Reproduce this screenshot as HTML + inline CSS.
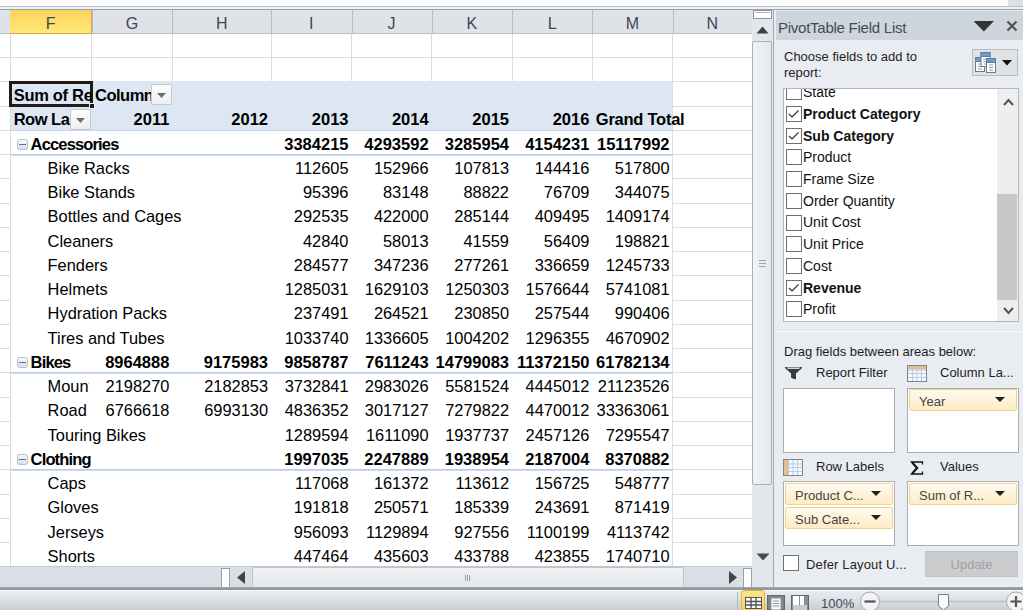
<!DOCTYPE html><html><head><meta charset="utf-8"><style>
*{box-sizing:border-box}
body{margin:0;width:1023px;height:610px;overflow:hidden;position:relative;background:#fff;font-family:"Liberation Sans",sans-serif;color:#000}
.a{position:absolute}
.t{position:absolute;white-space:nowrap;font-size:16px;line-height:20px}
.b{font-weight:bold}
.r{text-align:right}
</style></head><body>

<div class="a" style="left:0;top:0;width:1023px;height:6px;background:#fff"></div>
<div class="a" style="left:1008px;top:0;width:15px;height:6px;background:#dde1e6"></div>
<div class="a" style="left:0;top:6px;width:1023px;height:1px;background:#b9bec6"></div>
<div class="a" style="left:0;top:7px;width:1023px;height:2px;background:#eef1f8"></div>
<div class="a" style="left:0;top:9px;width:1023px;height:1px;background:#9ca1a8"></div>
<div class="a" style="left:0;top:10px;width:752px;height:23px;background:#dfe2e7"></div>
<div class="a" style="left:0;top:33px;width:752px;height:1px;background:#b9bdc4"></div>
<div class="a" style="left:10px;top:10px;width:82px;height:24px;background:linear-gradient(#fdd35c,#fee87a);border-right:1px solid #e0a244;border-bottom:1px solid #e0a244"></div>
<div class="t" style="left:10.0px;top:13.5px;width:81.5px;text-align:center;color:#3c4655;font-size:16px">F</div>
<div class="a" style="left:91.5px;top:10px;width:1px;height:23px;background:#b9bdc4"></div>
<div class="t" style="left:91.5px;top:13.5px;width:80.9px;text-align:center;color:#3c4655;font-size:16px">G</div>
<div class="a" style="left:172.4px;top:10px;width:1px;height:23px;background:#b9bdc4"></div>
<div class="t" style="left:172.4px;top:13.5px;width:98.6px;text-align:center;color:#3c4655;font-size:16px">H</div>
<div class="a" style="left:271.0px;top:10px;width:1px;height:23px;background:#b9bdc4"></div>
<div class="t" style="left:271.0px;top:13.5px;width:80.5px;text-align:center;color:#3c4655;font-size:16px">I</div>
<div class="a" style="left:351.5px;top:10px;width:1px;height:23px;background:#b9bdc4"></div>
<div class="t" style="left:351.5px;top:13.5px;width:80.1px;text-align:center;color:#3c4655;font-size:16px">J</div>
<div class="a" style="left:431.6px;top:10px;width:1px;height:23px;background:#b9bdc4"></div>
<div class="t" style="left:431.6px;top:13.5px;width:80.4px;text-align:center;color:#3c4655;font-size:16px">K</div>
<div class="a" style="left:512.0px;top:10px;width:1px;height:23px;background:#b9bdc4"></div>
<div class="t" style="left:512.0px;top:13.5px;width:80.4px;text-align:center;color:#3c4655;font-size:16px">L</div>
<div class="a" style="left:592.4px;top:10px;width:1px;height:23px;background:#b9bdc4"></div>
<div class="t" style="left:592.4px;top:13.5px;width:80.1px;text-align:center;color:#3c4655;font-size:16px">M</div>
<div class="a" style="left:672.5px;top:10px;width:1px;height:23px;background:#b9bdc4"></div>
<div class="t" style="left:672.5px;top:13.5px;width:79.5px;text-align:center;color:#3c4655;font-size:16px">N</div>
<div class="a" style="left:0;top:57.2px;width:752px;height:1px;background:#dadcdd"></div>
<div class="a" style="left:0;top:81.4px;width:752px;height:1px;background:#dadcdd"></div>
<div class="a" style="left:0;top:105.6px;width:752px;height:1px;background:#dadcdd"></div>
<div class="a" style="left:0;top:129.9px;width:752px;height:1px;background:#dadcdd"></div>
<div class="a" style="left:0;top:154.1px;width:752px;height:1px;background:#dadcdd"></div>
<div class="a" style="left:0;top:178.4px;width:752px;height:1px;background:#dadcdd"></div>
<div class="a" style="left:0;top:202.6px;width:752px;height:1px;background:#dadcdd"></div>
<div class="a" style="left:0;top:226.8px;width:752px;height:1px;background:#dadcdd"></div>
<div class="a" style="left:0;top:251.1px;width:752px;height:1px;background:#dadcdd"></div>
<div class="a" style="left:0;top:275.3px;width:752px;height:1px;background:#dadcdd"></div>
<div class="a" style="left:0;top:299.6px;width:752px;height:1px;background:#dadcdd"></div>
<div class="a" style="left:0;top:323.8px;width:752px;height:1px;background:#dadcdd"></div>
<div class="a" style="left:0;top:348.0px;width:752px;height:1px;background:#dadcdd"></div>
<div class="a" style="left:0;top:372.3px;width:752px;height:1px;background:#dadcdd"></div>
<div class="a" style="left:0;top:396.5px;width:752px;height:1px;background:#dadcdd"></div>
<div class="a" style="left:0;top:420.8px;width:752px;height:1px;background:#dadcdd"></div>
<div class="a" style="left:0;top:445.0px;width:752px;height:1px;background:#dadcdd"></div>
<div class="a" style="left:0;top:469.2px;width:752px;height:1px;background:#dadcdd"></div>
<div class="a" style="left:0;top:493.5px;width:752px;height:1px;background:#dadcdd"></div>
<div class="a" style="left:0;top:517.7px;width:752px;height:1px;background:#dadcdd"></div>
<div class="a" style="left:0;top:542.0px;width:752px;height:1px;background:#dadcdd"></div>
<div class="a" style="left:0;top:566.2px;width:752px;height:1px;background:#dadcdd"></div>
<div class="a" style="left:9.5px;top:34px;width:1px;height:532px;background:#dadcdd"></div>
<div class="a" style="left:91.0px;top:34px;width:1px;height:532px;background:#dadcdd"></div>
<div class="a" style="left:171.9px;top:34px;width:1px;height:532px;background:#dadcdd"></div>
<div class="a" style="left:270.5px;top:34px;width:1px;height:532px;background:#dadcdd"></div>
<div class="a" style="left:351.0px;top:34px;width:1px;height:532px;background:#dadcdd"></div>
<div class="a" style="left:431.1px;top:34px;width:1px;height:532px;background:#dadcdd"></div>
<div class="a" style="left:511.5px;top:34px;width:1px;height:532px;background:#dadcdd"></div>
<div class="a" style="left:591.9px;top:34px;width:1px;height:532px;background:#dadcdd"></div>
<div class="a" style="left:672.0px;top:34px;width:1px;height:532px;background:#dadcdd"></div>
<div class="a" style="left:10.5px;top:81.4px;width:661.5px;height:485.1px;background:#fff"></div>
<div class="a" style="left:10.5px;top:81.4px;width:661.5px;height:48.5px;background:#dce7f3"></div>
<div class="a" style="left:10.5px;top:129.9px;width:661.5px;height:1.6px;background:linear-gradient(#adc6e6,#d6e3f3)"></div>
<div class="a" style="left:10.5px;top:154.1px;width:661.5px;height:1.6px;background:linear-gradient(#adc6e6,#d6e3f3)"></div>
<div class="a" style="left:10.5px;top:372.3px;width:661.5px;height:1.6px;background:linear-gradient(#adc6e6,#d6e3f3)"></div>
<div class="a" style="left:10.5px;top:469.2px;width:661.5px;height:1.6px;background:linear-gradient(#adc6e6,#d6e3f3)"></div>
<div class="a" style="left:9px;top:81px;width:84px;height:26px;border:3px solid #221a16"></div>
<div class="a" style="left:89px;top:103px;width:6px;height:6px;background:#221a16;border:1px solid #e8eef6"></div>
<div class="t b" style="left:13.7px;top:85.2px;font-size:16.5px;color:#000;letter-spacing:-0.3px;width:78px;overflow:hidden">Sum of Re</div>
<div class="t b" style="left:95.0px;top:85.2px;font-size:16.5px;color:#000;letter-spacing:-0.5px;width:57px;overflow:hidden">Column Labels</div>
<div class="t b" style="left:13.7px;top:109.4px;font-size:16.5px;color:#000;letter-spacing:-0.5px;width:57px;overflow:hidden">Row Labels</div>
<div class="t b" style="left:-130.6px;width:300px;text-align:right;top:109.4px;font-size:16.5px;color:#000;">2011</div>
<div class="t b" style="left:-32.0px;width:300px;text-align:right;top:109.4px;font-size:16.5px;color:#000;">2012</div>
<div class="t b" style="left:48.5px;width:300px;text-align:right;top:109.4px;font-size:16.5px;color:#000;">2013</div>
<div class="t b" style="left:128.6px;width:300px;text-align:right;top:109.4px;font-size:16.5px;color:#000;">2014</div>
<div class="t b" style="left:209.0px;width:300px;text-align:right;top:109.4px;font-size:16.5px;color:#000;">2015</div>
<div class="t b" style="left:289.4px;width:300px;text-align:right;top:109.4px;font-size:16.5px;color:#000;">2016</div>
<div class="t b" style="left:595.8px;top:109.4px;font-size:16.5px;color:#000;letter-spacing:-0.25px">Grand Total</div>
<div class="a" style="left:151px;top:84px;width:21px;height:21px;background:linear-gradient(#fdfdfd,#eceef1);border:1px solid #c5c9cf;border-radius:1px"></div>
<svg class="a" style="left:157px;top:92.5px" width="9" height="5"><path d="M0 0H9L4.5 5Z" fill="#6d6f72"/></svg>
<div class="a" style="left:70px;top:109px;width:21px;height:21px;background:linear-gradient(#fdfdfd,#eceef1);border:1px solid #c5c9cf;border-radius:1px"></div>
<svg class="a" style="left:76px;top:117.5px" width="9" height="5"><path d="M0 0H9L4.5 5Z" fill="#6d6f72"/></svg>
<div class="a" style="left:17px;top:138.9px;width:11px;height:11px;border:1px solid #b3c0d0;border-radius:2.5px;background:linear-gradient(#f6f8fa,#d9dfe6)"></div>
<div class="a" style="left:19px;top:143.9px;width:7px;height:1px;background:#5a7490"></div>
<div class="t b" style="left:30.6px;top:133.7px;font-size:16.5px;color:#000;letter-spacing:-0.85px">Accessories</div>
<div class="t b" style="left:48.5px;width:300px;text-align:right;top:133.7px;font-size:16.5px;color:#000;">3384215</div>
<div class="t b" style="left:128.6px;width:300px;text-align:right;top:133.7px;font-size:16.5px;color:#000;">4293592</div>
<div class="t b" style="left:209.0px;width:300px;text-align:right;top:133.7px;font-size:16.5px;color:#000;">3285954</div>
<div class="t b" style="left:289.4px;width:300px;text-align:right;top:133.7px;font-size:16.5px;color:#000;">4154231</div>
<div class="t b" style="left:369.5px;width:300px;text-align:right;top:133.7px;font-size:16.5px;color:#000;">15117992</div>
<div class="t" style="left:47.6px;top:157.9px;font-size:16.4px;color:#000;">Bike Racks</div>
<div class="t" style="left:48.5px;width:300px;text-align:right;top:157.9px;font-size:16.4px;color:#000;">112605</div>
<div class="t" style="left:128.6px;width:300px;text-align:right;top:157.9px;font-size:16.4px;color:#000;">152966</div>
<div class="t" style="left:209.0px;width:300px;text-align:right;top:157.9px;font-size:16.4px;color:#000;">107813</div>
<div class="t" style="left:289.4px;width:300px;text-align:right;top:157.9px;font-size:16.4px;color:#000;">144416</div>
<div class="t" style="left:369.5px;width:300px;text-align:right;top:157.9px;font-size:16.4px;color:#000;">517800</div>
<div class="t" style="left:47.6px;top:182.2px;font-size:16.4px;color:#000;">Bike Stands</div>
<div class="t" style="left:48.5px;width:300px;text-align:right;top:182.2px;font-size:16.4px;color:#000;">95396</div>
<div class="t" style="left:128.6px;width:300px;text-align:right;top:182.2px;font-size:16.4px;color:#000;">83148</div>
<div class="t" style="left:209.0px;width:300px;text-align:right;top:182.2px;font-size:16.4px;color:#000;">88822</div>
<div class="t" style="left:289.4px;width:300px;text-align:right;top:182.2px;font-size:16.4px;color:#000;">76709</div>
<div class="t" style="left:369.5px;width:300px;text-align:right;top:182.2px;font-size:16.4px;color:#000;">344075</div>
<div class="t" style="left:47.6px;top:206.4px;font-size:16.4px;color:#000;">Bottles and Cages</div>
<div class="t" style="left:48.5px;width:300px;text-align:right;top:206.4px;font-size:16.4px;color:#000;">292535</div>
<div class="t" style="left:128.6px;width:300px;text-align:right;top:206.4px;font-size:16.4px;color:#000;">422000</div>
<div class="t" style="left:209.0px;width:300px;text-align:right;top:206.4px;font-size:16.4px;color:#000;">285144</div>
<div class="t" style="left:289.4px;width:300px;text-align:right;top:206.4px;font-size:16.4px;color:#000;">409495</div>
<div class="t" style="left:369.5px;width:300px;text-align:right;top:206.4px;font-size:16.4px;color:#000;">1409174</div>
<div class="t" style="left:47.6px;top:230.7px;font-size:16.4px;color:#000;">Cleaners</div>
<div class="t" style="left:48.5px;width:300px;text-align:right;top:230.7px;font-size:16.4px;color:#000;">42840</div>
<div class="t" style="left:128.6px;width:300px;text-align:right;top:230.7px;font-size:16.4px;color:#000;">58013</div>
<div class="t" style="left:209.0px;width:300px;text-align:right;top:230.7px;font-size:16.4px;color:#000;">41559</div>
<div class="t" style="left:289.4px;width:300px;text-align:right;top:230.7px;font-size:16.4px;color:#000;">56409</div>
<div class="t" style="left:369.5px;width:300px;text-align:right;top:230.7px;font-size:16.4px;color:#000;">198821</div>
<div class="t" style="left:47.6px;top:254.9px;font-size:16.4px;color:#000;">Fenders</div>
<div class="t" style="left:48.5px;width:300px;text-align:right;top:254.9px;font-size:16.4px;color:#000;">284577</div>
<div class="t" style="left:128.6px;width:300px;text-align:right;top:254.9px;font-size:16.4px;color:#000;">347236</div>
<div class="t" style="left:209.0px;width:300px;text-align:right;top:254.9px;font-size:16.4px;color:#000;">277261</div>
<div class="t" style="left:289.4px;width:300px;text-align:right;top:254.9px;font-size:16.4px;color:#000;">336659</div>
<div class="t" style="left:369.5px;width:300px;text-align:right;top:254.9px;font-size:16.4px;color:#000;">1245733</div>
<div class="t" style="left:47.6px;top:279.1px;font-size:16.4px;color:#000;">Helmets</div>
<div class="t" style="left:48.5px;width:300px;text-align:right;top:279.1px;font-size:16.4px;color:#000;">1285031</div>
<div class="t" style="left:128.6px;width:300px;text-align:right;top:279.1px;font-size:16.4px;color:#000;">1629103</div>
<div class="t" style="left:209.0px;width:300px;text-align:right;top:279.1px;font-size:16.4px;color:#000;">1250303</div>
<div class="t" style="left:289.4px;width:300px;text-align:right;top:279.1px;font-size:16.4px;color:#000;">1576644</div>
<div class="t" style="left:369.5px;width:300px;text-align:right;top:279.1px;font-size:16.4px;color:#000;">5741081</div>
<div class="t" style="left:47.6px;top:303.4px;font-size:16.4px;color:#000;">Hydration Packs</div>
<div class="t" style="left:48.5px;width:300px;text-align:right;top:303.4px;font-size:16.4px;color:#000;">237491</div>
<div class="t" style="left:128.6px;width:300px;text-align:right;top:303.4px;font-size:16.4px;color:#000;">264521</div>
<div class="t" style="left:209.0px;width:300px;text-align:right;top:303.4px;font-size:16.4px;color:#000;">230850</div>
<div class="t" style="left:289.4px;width:300px;text-align:right;top:303.4px;font-size:16.4px;color:#000;">257544</div>
<div class="t" style="left:369.5px;width:300px;text-align:right;top:303.4px;font-size:16.4px;color:#000;">990406</div>
<div class="t" style="left:47.6px;top:327.6px;font-size:16.4px;color:#000;">Tires and Tubes</div>
<div class="t" style="left:48.5px;width:300px;text-align:right;top:327.6px;font-size:16.4px;color:#000;">1033740</div>
<div class="t" style="left:128.6px;width:300px;text-align:right;top:327.6px;font-size:16.4px;color:#000;">1336605</div>
<div class="t" style="left:209.0px;width:300px;text-align:right;top:327.6px;font-size:16.4px;color:#000;">1004202</div>
<div class="t" style="left:289.4px;width:300px;text-align:right;top:327.6px;font-size:16.4px;color:#000;">1296355</div>
<div class="t" style="left:369.5px;width:300px;text-align:right;top:327.6px;font-size:16.4px;color:#000;">4670902</div>
<div class="a" style="left:17px;top:357.0px;width:11px;height:11px;border:1px solid #b3c0d0;border-radius:2.5px;background:linear-gradient(#f6f8fa,#d9dfe6)"></div>
<div class="a" style="left:19px;top:362.0px;width:7px;height:1px;background:#5a7490"></div>
<div class="t b" style="left:30.6px;top:351.8px;font-size:16.5px;color:#000;letter-spacing:-0.85px">Bikes</div>
<div class="t b" style="left:-130.6px;width:300px;text-align:right;top:351.8px;font-size:16.5px;color:#000;">8964888</div>
<div class="t b" style="left:-32.0px;width:300px;text-align:right;top:351.8px;font-size:16.5px;color:#000;">9175983</div>
<div class="t b" style="left:48.5px;width:300px;text-align:right;top:351.8px;font-size:16.5px;color:#000;">9858787</div>
<div class="t b" style="left:128.6px;width:300px;text-align:right;top:351.8px;font-size:16.5px;color:#000;">7611243</div>
<div class="t b" style="left:209.0px;width:300px;text-align:right;top:351.8px;font-size:16.5px;color:#000;">14799083</div>
<div class="t b" style="left:289.4px;width:300px;text-align:right;top:351.8px;font-size:16.5px;color:#000;">11372150</div>
<div class="t b" style="left:369.5px;width:300px;text-align:right;top:351.8px;font-size:16.5px;color:#000;">61782134</div>
<div class="t" style="left:47.6px;top:376.1px;font-size:16.4px;color:#000;width:41px;overflow:hidden">Mountain Bikes</div>
<div class="t" style="left:-130.6px;width:300px;text-align:right;top:376.1px;font-size:16.4px;color:#000;">2198270</div>
<div class="t" style="left:-32.0px;width:300px;text-align:right;top:376.1px;font-size:16.4px;color:#000;">2182853</div>
<div class="t" style="left:48.5px;width:300px;text-align:right;top:376.1px;font-size:16.4px;color:#000;">3732841</div>
<div class="t" style="left:128.6px;width:300px;text-align:right;top:376.1px;font-size:16.4px;color:#000;">2983026</div>
<div class="t" style="left:209.0px;width:300px;text-align:right;top:376.1px;font-size:16.4px;color:#000;">5581524</div>
<div class="t" style="left:289.4px;width:300px;text-align:right;top:376.1px;font-size:16.4px;color:#000;">4445012</div>
<div class="t" style="left:369.5px;width:300px;text-align:right;top:376.1px;font-size:16.4px;color:#000;">21123526</div>
<div class="t" style="left:47.6px;top:400.3px;font-size:16.4px;color:#000;">Road</div>
<div class="t" style="left:-130.6px;width:300px;text-align:right;top:400.3px;font-size:16.4px;color:#000;">6766618</div>
<div class="t" style="left:-32.0px;width:300px;text-align:right;top:400.3px;font-size:16.4px;color:#000;">6993130</div>
<div class="t" style="left:48.5px;width:300px;text-align:right;top:400.3px;font-size:16.4px;color:#000;">4836352</div>
<div class="t" style="left:128.6px;width:300px;text-align:right;top:400.3px;font-size:16.4px;color:#000;">3017127</div>
<div class="t" style="left:209.0px;width:300px;text-align:right;top:400.3px;font-size:16.4px;color:#000;">7279822</div>
<div class="t" style="left:289.4px;width:300px;text-align:right;top:400.3px;font-size:16.4px;color:#000;">4470012</div>
<div class="t" style="left:369.5px;width:300px;text-align:right;top:400.3px;font-size:16.4px;color:#000;">33363061</div>
<div class="t" style="left:47.6px;top:424.6px;font-size:16.4px;color:#000;">Touring Bikes</div>
<div class="t" style="left:48.5px;width:300px;text-align:right;top:424.6px;font-size:16.4px;color:#000;">1289594</div>
<div class="t" style="left:128.6px;width:300px;text-align:right;top:424.6px;font-size:16.4px;color:#000;">1611090</div>
<div class="t" style="left:209.0px;width:300px;text-align:right;top:424.6px;font-size:16.4px;color:#000;">1937737</div>
<div class="t" style="left:289.4px;width:300px;text-align:right;top:424.6px;font-size:16.4px;color:#000;">2457126</div>
<div class="t" style="left:369.5px;width:300px;text-align:right;top:424.6px;font-size:16.4px;color:#000;">7295547</div>
<div class="a" style="left:17px;top:454.0px;width:11px;height:11px;border:1px solid #b3c0d0;border-radius:2.5px;background:linear-gradient(#f6f8fa,#d9dfe6)"></div>
<div class="a" style="left:19px;top:459.0px;width:7px;height:1px;background:#5a7490"></div>
<div class="t b" style="left:30.6px;top:448.8px;font-size:16.5px;color:#000;letter-spacing:-0.85px">Clothing</div>
<div class="t b" style="left:48.5px;width:300px;text-align:right;top:448.8px;font-size:16.5px;color:#000;">1997035</div>
<div class="t b" style="left:128.6px;width:300px;text-align:right;top:448.8px;font-size:16.5px;color:#000;">2247889</div>
<div class="t b" style="left:209.0px;width:300px;text-align:right;top:448.8px;font-size:16.5px;color:#000;">1938954</div>
<div class="t b" style="left:289.4px;width:300px;text-align:right;top:448.8px;font-size:16.5px;color:#000;">2187004</div>
<div class="t b" style="left:369.5px;width:300px;text-align:right;top:448.8px;font-size:16.5px;color:#000;">8370882</div>
<div class="t" style="left:47.6px;top:473.1px;font-size:16.4px;color:#000;">Caps</div>
<div class="t" style="left:48.5px;width:300px;text-align:right;top:473.1px;font-size:16.4px;color:#000;">117068</div>
<div class="t" style="left:128.6px;width:300px;text-align:right;top:473.1px;font-size:16.4px;color:#000;">161372</div>
<div class="t" style="left:209.0px;width:300px;text-align:right;top:473.1px;font-size:16.4px;color:#000;">113612</div>
<div class="t" style="left:289.4px;width:300px;text-align:right;top:473.1px;font-size:16.4px;color:#000;">156725</div>
<div class="t" style="left:369.5px;width:300px;text-align:right;top:473.1px;font-size:16.4px;color:#000;">548777</div>
<div class="t" style="left:47.6px;top:497.3px;font-size:16.4px;color:#000;">Gloves</div>
<div class="t" style="left:48.5px;width:300px;text-align:right;top:497.3px;font-size:16.4px;color:#000;">191818</div>
<div class="t" style="left:128.6px;width:300px;text-align:right;top:497.3px;font-size:16.4px;color:#000;">250571</div>
<div class="t" style="left:209.0px;width:300px;text-align:right;top:497.3px;font-size:16.4px;color:#000;">185339</div>
<div class="t" style="left:289.4px;width:300px;text-align:right;top:497.3px;font-size:16.4px;color:#000;">243691</div>
<div class="t" style="left:369.5px;width:300px;text-align:right;top:497.3px;font-size:16.4px;color:#000;">871419</div>
<div class="t" style="left:47.6px;top:521.5px;font-size:16.4px;color:#000;">Jerseys</div>
<div class="t" style="left:48.5px;width:300px;text-align:right;top:521.5px;font-size:16.4px;color:#000;">956093</div>
<div class="t" style="left:128.6px;width:300px;text-align:right;top:521.5px;font-size:16.4px;color:#000;">1129894</div>
<div class="t" style="left:209.0px;width:300px;text-align:right;top:521.5px;font-size:16.4px;color:#000;">927556</div>
<div class="t" style="left:289.4px;width:300px;text-align:right;top:521.5px;font-size:16.4px;color:#000;">1100199</div>
<div class="t" style="left:369.5px;width:300px;text-align:right;top:521.5px;font-size:16.4px;color:#000;">4113742</div>
<div class="t" style="left:47.6px;top:545.8px;font-size:16.4px;color:#000;">Shorts</div>
<div class="t" style="left:48.5px;width:300px;text-align:right;top:545.8px;font-size:16.4px;color:#000;">447464</div>
<div class="t" style="left:128.6px;width:300px;text-align:right;top:545.8px;font-size:16.4px;color:#000;">435603</div>
<div class="t" style="left:209.0px;width:300px;text-align:right;top:545.8px;font-size:16.4px;color:#000;">433788</div>
<div class="t" style="left:289.4px;width:300px;text-align:right;top:545.8px;font-size:16.4px;color:#000;">423855</div>
<div class="t" style="left:369.5px;width:300px;text-align:right;top:545.8px;font-size:16.4px;color:#000;">1740710</div>
<div class="a" style="left:752px;top:10px;width:21px;height:580px;background:#e3e6eb"></div>
<div class="a" style="left:753px;top:10px;width:19px;height:9px;background:#fff;border:1px solid #8e949b"></div>
<div class="a" style="left:755px;top:12px;width:15px;height:1px;background:#b5b9bf"></div>
<svg class="a" style="left:756px;top:26px" width="13" height="8"><path d="M0.5 7.5H12.5L6.5 0.5Z" fill="#404040"/></svg>
<div class="a" style="left:752px;top:41px;width:20px;height:444px;background:linear-gradient(90deg,#f1f3f6,#e5e8ec);border:1px solid #a9afb7;border-radius:2px"></div>
<div class="a" style="left:759px;top:260px;width:7px;height:1px;background:#a0a5ab"></div>
<div class="a" style="left:759px;top:263px;width:7px;height:1px;background:#a0a5ab"></div>
<div class="a" style="left:759px;top:266px;width:7px;height:1px;background:#a0a5ab"></div>
<svg class="a" style="left:756px;top:553px" width="14" height="8"><path d="M0.5 0.5H13.5L7 7.5Z" fill="#4a4a4a"/></svg>
<div class="a" style="left:0;top:566px;width:752px;height:23px;background:#dadee5;border-top:1px solid #c3c8cf"></div>
<div class="a" style="left:0;top:589px;width:773px;height:1px;background:#9ca1a8"></div>
<div class="a" style="left:221px;top:568px;width:9px;height:20px;background:#fff;border:1px solid #9aa0a8"></div>
<svg class="a" style="left:237px;top:571px" width="8" height="13"><path d="M8 0V13L0 6.5Z" fill="#444"/></svg>
<div class="a" style="left:252px;top:567px;width:432px;height:22px;background:linear-gradient(#f0f2f5,#e3e6ea);border:1px solid #bfc4cb;border-radius:2px"></div>
<div class="a" style="left:465px;top:575px;width:1px;height:6px;background:#9ba0a6"></div>
<div class="a" style="left:467px;top:575px;width:1px;height:6px;background:#9ba0a6"></div>
<div class="a" style="left:469px;top:575px;width:1px;height:6px;background:#9ba0a6"></div>
<svg class="a" style="left:729px;top:571px" width="8" height="13"><path d="M0 0V13L8 6.5Z" fill="#444"/></svg>
<div class="a" style="left:743px;top:568px;width:9px;height:20px;background:#fff;border:1px solid #9aa0a8"></div>
<div class="a" style="left:0;top:590px;width:1023px;height:20px;background:linear-gradient(#fafcfe 0px,#e7eaee 2px,#dde0e5 10px,#c9cdd3 20px)"></div>
<div class="a" style="left:0;top:587px;width:1023px;height:3px;background:linear-gradient(#a9afb7,#8a9098 60%,#9aa0a8)"></div>
<div class="a" style="left:737px;top:592px;width:1px;height:18px;background:#b0b5bb"></div>
<div class="a" style="left:741px;top:590px;width:24px;height:22px;background:linear-gradient(#fde38d,#fcd25f);border:1px solid #e5b248;border-radius:3px"></div>
<svg class="a" style="left:745px;top:597px" width="17" height="12"><rect x="0.5" y="0.5" width="16" height="11" fill="#fff" stroke="#555"/><path d="M0 4.5H17M0 8H17M6 0V12M11 0V12" stroke="#555" stroke-width="1.4"/></svg>
<svg class="a" style="left:767px;top:595px" width="18" height="15"><rect x="0.5" y="0.5" width="17" height="14" fill="#7d8289" stroke="#666"/><rect x="4" y="3" width="10" height="12" fill="#f4f4f4" stroke="#999"/><path d="M6 6H12M6 8.5H12M6 11H12" stroke="#999"/></svg>
<svg class="a" style="left:791px;top:595px" width="18" height="15"><rect x="0.5" y="0.5" width="17" height="14" fill="#8a8f95" stroke="#666"/><rect x="2" y="1" width="6" height="9" fill="#fff"/><rect x="9" y="1" width="4" height="9" fill="#fff"/><rect x="2" y="10" width="14" height="5" fill="#c9cdd2"/></svg>
<div class="t" style="left:821px;top:595.5px;font-size:13px;line-height:16px;color:#3c4a5a">100%</div>
<svg class="a" style="left:859px;top:591px" width="164" height="19"><path d="M21 10.5H147" stroke="#b9c0c8" stroke-width="1.5"/><circle cx="11" cy="10.5" r="9.5" fill="#f2f3f5" stroke="#a3a9b0"/><path d="M5.5 10.5H16.5" stroke="#555" stroke-width="2.2"/><circle cx="157" cy="10.5" r="9.5" fill="#f2f3f5" stroke="#a3a9b0"/><path d="M151.5 10.5H162.5M157 5V16" stroke="#555" stroke-width="2.2"/><path d="M79.5 3.5H89.5V15L84.5 19L79.5 15Z" fill="#fafbfc" stroke="#7c828a"/></svg>
<div class="a" style="left:773px;top:10px;width:250px;height:577px;background:#e9ecf1;border-left:1px solid #a3a9b1"></div>
<div class="a" style="left:776px;top:11px;width:247px;height:29px;background:#cfd5dd"></div>
<div class="t" style="left:778px;top:18.5px;font-size:15px;line-height:18px;color:#3f4b59;letter-spacing:-0.25px">PivotTable Field List</div>
<svg class="a" style="left:973px;top:21px" width="22" height="11"><path d="M0.5 0H21L10.8 10.5Z" fill="#333"/></svg>
<svg class="a" style="left:1006px;top:20px" width="12" height="12"><path d="M1.5 1.5L10.5 10.5M10.5 1.5L1.5 10.5" stroke="#555" stroke-width="2.3"/></svg>
<div class="t" style="left:784px;top:49px;font-size:13px;line-height:16px;color:#1e1e1e">Choose fields to add to<br>report:</div>
<div class="a" style="left:972px;top:49px;width:46px;height:27px;background:#dfe1e4;border:1px solid #b9bcc0"></div>
<svg class="a" style="left:975px;top:52px" width="21" height="21"><g stroke="#6f7c8c" stroke-width="1"><rect x="0.5" y="5.5" width="9" height="14" fill="#fff"/><rect x="0.5" y="5.5" width="9" height="4" fill="#5d9de0"/></g><path d="M3 12H7M3 14.5H7M3 17H7" stroke="#8a9bb0"/><g stroke="#6f7c8c"><rect x="6" y="0.5" width="9" height="14" fill="#fff"/><rect x="6" y="0.5" width="9" height="4" fill="#5d9de0"/></g><path d="M8.5 7H12.5M8.5 9.5H12.5M8.5 12H12.5" stroke="#8a9bb0"/><g stroke="#6f7c8c"><rect x="11.5" y="6.5" width="9" height="14" fill="#fff"/><rect x="11.5" y="6.5" width="9" height="4" fill="#5d9de0"/></g><path d="M14 13H18M14 15.5H18M14 18H18" stroke="#8a9bb0"/></svg>
<svg class="a" style="left:1002px;top:60px" width="10" height="6"><path d="M0 0H10L5 5.5Z" fill="#111"/></svg>
<div class="a" style="left:783px;top:88px;width:236px;height:234px;background:#fff;border:1px solid #b4b8be;overflow:hidden">
<div class="a" style="left:213px;top:0;width:21px;height:232px;background:#eeeeee"></div>
<div class="a" style="left:213px;top:105px;width:20px;height:106px;background:#c8c8c8"></div>
<svg class="a" style="left:219px;top:9px" width="11" height="8"><path d="M1 7L5.5 2L10 7" fill="none" stroke="#555" stroke-width="2"/></svg>
<svg class="a" style="left:219px;top:218px" width="11" height="8"><path d="M1 1L5.5 6L10 1" fill="none" stroke="#555" stroke-width="2"/></svg>
<div class="a" style="left:2px;top:-4.8px;width:16px;height:16px;border:1px solid #6f6f6f;background:#fff"></div>
<div class="t" style="left:19px;top:-4.9px;font-size:14px;line-height:16px;font-weight:normal;color:#111">State</div>
<div class="a" style="left:2px;top:16.9px;width:16px;height:16px;border:1px solid #6f6f6f;background:#fff"></div>
<svg class="a" style="left:4px;top:19.9px" width="11" height="9"><path d="M1 5L4 8L10.5 1.5" fill="none" stroke="#333" stroke-width="1.2"/></svg>
<div class="t" style="left:19px;top:16.8px;font-size:14px;line-height:16px;font-weight:bold;color:#111">Product Category</div>
<div class="a" style="left:2px;top:38.6px;width:16px;height:16px;border:1px solid #6f6f6f;background:#fff"></div>
<svg class="a" style="left:4px;top:41.6px" width="11" height="9"><path d="M1 5L4 8L10.5 1.5" fill="none" stroke="#333" stroke-width="1.2"/></svg>
<div class="t" style="left:19px;top:38.5px;font-size:14px;line-height:16px;font-weight:bold;color:#111">Sub Category</div>
<div class="a" style="left:2px;top:60.4px;width:16px;height:16px;border:1px solid #6f6f6f;background:#fff"></div>
<div class="t" style="left:19px;top:60.3px;font-size:14px;line-height:16px;font-weight:normal;color:#111">Product</div>
<div class="a" style="left:2px;top:82.1px;width:16px;height:16px;border:1px solid #6f6f6f;background:#fff"></div>
<div class="t" style="left:19px;top:82.0px;font-size:14px;line-height:16px;font-weight:normal;color:#111">Frame Size</div>
<div class="a" style="left:2px;top:103.8px;width:16px;height:16px;border:1px solid #6f6f6f;background:#fff"></div>
<div class="t" style="left:19px;top:103.7px;font-size:14px;line-height:16px;font-weight:normal;color:#111">Order Quantity</div>
<div class="a" style="left:2px;top:125.5px;width:16px;height:16px;border:1px solid #6f6f6f;background:#fff"></div>
<div class="t" style="left:19px;top:125.4px;font-size:14px;line-height:16px;font-weight:normal;color:#111">Unit Cost</div>
<div class="a" style="left:2px;top:147.2px;width:16px;height:16px;border:1px solid #6f6f6f;background:#fff"></div>
<div class="t" style="left:19px;top:147.1px;font-size:14px;line-height:16px;font-weight:normal;color:#111">Unit Price</div>
<div class="a" style="left:2px;top:169.0px;width:16px;height:16px;border:1px solid #6f6f6f;background:#fff"></div>
<div class="t" style="left:19px;top:168.9px;font-size:14px;line-height:16px;font-weight:normal;color:#111">Cost</div>
<div class="a" style="left:2px;top:190.7px;width:16px;height:16px;border:1px solid #6f6f6f;background:#fff"></div>
<svg class="a" style="left:4px;top:193.7px" width="11" height="9"><path d="M1 5L4 8L10.5 1.5" fill="none" stroke="#333" stroke-width="1.2"/></svg>
<div class="t" style="left:19px;top:190.6px;font-size:14px;line-height:16px;font-weight:bold;color:#111">Revenue</div>
<div class="a" style="left:2px;top:212.4px;width:16px;height:16px;border:1px solid #6f6f6f;background:#fff"></div>
<div class="t" style="left:19px;top:212.3px;font-size:14px;line-height:16px;font-weight:normal;color:#111">Profit</div>
</div>
<div class="a" style="left:776px;top:331px;width:247px;height:1px;background:#fbfcfd"></div>
<div class="a" style="left:776px;top:330px;width:247px;height:1px;background:#dde1e7"></div>
<div class="t" style="left:784px;top:344px;font-size:13px;line-height:16px;color:#1e1e1e">Drag fields between areas below:</div>
<svg class="a" style="left:784px;top:366px" width="19" height="14"><path d="M1 1.5H18L11.5 7.5V13L7.5 11.5V7.5Z" fill="#3a3a3a" stroke="#2a2a2a" stroke-width="0.8"/><path d="M2.5 1.5H16.5L15 3H4Z" fill="#d8d8d8"/></svg>
<div class="t" style="left:816px;top:365px;font-size:13px;line-height:16px;color:#1e1e1e">Report Filter</div>
<svg class="a" style="left:907px;top:365px" width="20" height="17"><rect x="0.5" y="0.5" width="19" height="16" fill="#f4f8fc" stroke="#7a8696"/><rect x="1" y="1" width="18" height="3.5" fill="#efbd78"/><path d="M5.5 1V16M10 1V16M14.5 1V16M1 5H19M1 8.5H19M1 12.5H19" stroke="#b9cbe0" stroke-width="1"/></svg>
<div class="t" style="left:940px;top:365px;font-size:13px;line-height:16px;color:#1e1e1e">Column La...</div>
<svg class="a" style="left:783px;top:459px" width="20" height="17"><rect x="0.5" y="0.5" width="19" height="16" fill="#f4f8fc" stroke="#7a8696"/><rect x="1" y="1" width="4" height="15" fill="#efbd78"/><path d="M5.5 1V16M10 1V16M14.5 1V16M1 5H19M1 8.5H19M1 12.5H19" stroke="#b9cbe0" stroke-width="1"/></svg>
<div class="t" style="left:816px;top:459px;font-size:13px;line-height:16px;color:#1e1e1e">Row Labels</div>
<svg class="a" style="left:910px;top:461px" width="14" height="14"><path d="M12.5 3.5V1H1.5L6.8 7L1.5 13H12.5V10.5" fill="none" stroke="#111" stroke-width="1.3"/><path d="M2.2 1.5L7.3 7L2.2 12.5" fill="none" stroke="#111" stroke-width="1.9"/></svg>
<div class="t" style="left:940px;top:459px;font-size:13px;line-height:16px;color:#1e1e1e">Values</div>
<div class="a" style="left:783px;top:388px;width:112px;height:65px;background:#fff;border:1px solid #a9aeb5"></div>
<div class="a" style="left:907px;top:388px;width:112px;height:65px;background:#fff;border:1px solid #a9aeb5"></div>
<div class="a" style="left:783px;top:481px;width:112px;height:65px;background:#fff;border:1px solid #a9aeb5"></div>
<div class="a" style="left:907px;top:481px;width:112px;height:65px;background:#fff;border:1px solid #a9aeb5"></div>
<div class="a" style="left:909px;top:389px;width:108px;height:22px;background:linear-gradient(#fffaf0,#fdebc4);border:1px solid #f0d48e;border-radius:2px"></div>
<div class="t" style="left:919px;top:394px;font-size:13px;line-height:16px;color:#454545">Year</div>
<svg class="a" style="left:995px;top:397px" width="10" height="6"><path d="M0 0H10L5 5Z" fill="#222"/></svg>
<div class="a" style="left:785px;top:483px;width:108px;height:22px;background:linear-gradient(#fffaf0,#fdebc4);border:1px solid #f0d48e;border-radius:2px"></div>
<div class="t" style="left:795px;top:488px;font-size:13px;line-height:16px;color:#454545">Product C...</div>
<svg class="a" style="left:871px;top:491px" width="10" height="6"><path d="M0 0H10L5 5Z" fill="#222"/></svg>
<div class="a" style="left:785px;top:507px;width:108px;height:22px;background:linear-gradient(#fffaf0,#fdebc4);border:1px solid #f0d48e;border-radius:2px"></div>
<div class="t" style="left:795px;top:512px;font-size:13px;line-height:16px;color:#454545">Sub Cate...</div>
<svg class="a" style="left:871px;top:515px" width="10" height="6"><path d="M0 0H10L5 5Z" fill="#222"/></svg>
<div class="a" style="left:909px;top:483px;width:108px;height:22px;background:linear-gradient(#fffaf0,#fdebc4);border:1px solid #f0d48e;border-radius:2px"></div>
<div class="t" style="left:919px;top:488px;font-size:13px;line-height:16px;color:#454545">Sum of R...</div>
<svg class="a" style="left:995px;top:491px" width="10" height="6"><path d="M0 0H10L5 5Z" fill="#222"/></svg>
<div class="a" style="left:783px;top:555px;width:16px;height:16px;background:#fff;border:1px solid #707070"></div>
<div class="t" style="left:806px;top:557px;font-size:13px;line-height:16px;color:#1e1e1e;letter-spacing:0.15px">Defer Layout U...</div>
<div class="a" style="left:925px;top:551px;width:93px;height:26px;background:#cbcccd;border:1px solid #c2c3c4"></div>
<div class="t" style="left:925px;top:556.5px;width:93px;text-align:center;font-size:13px;line-height:16px;color:#9ea1a5">Update</div>
</body></html>
